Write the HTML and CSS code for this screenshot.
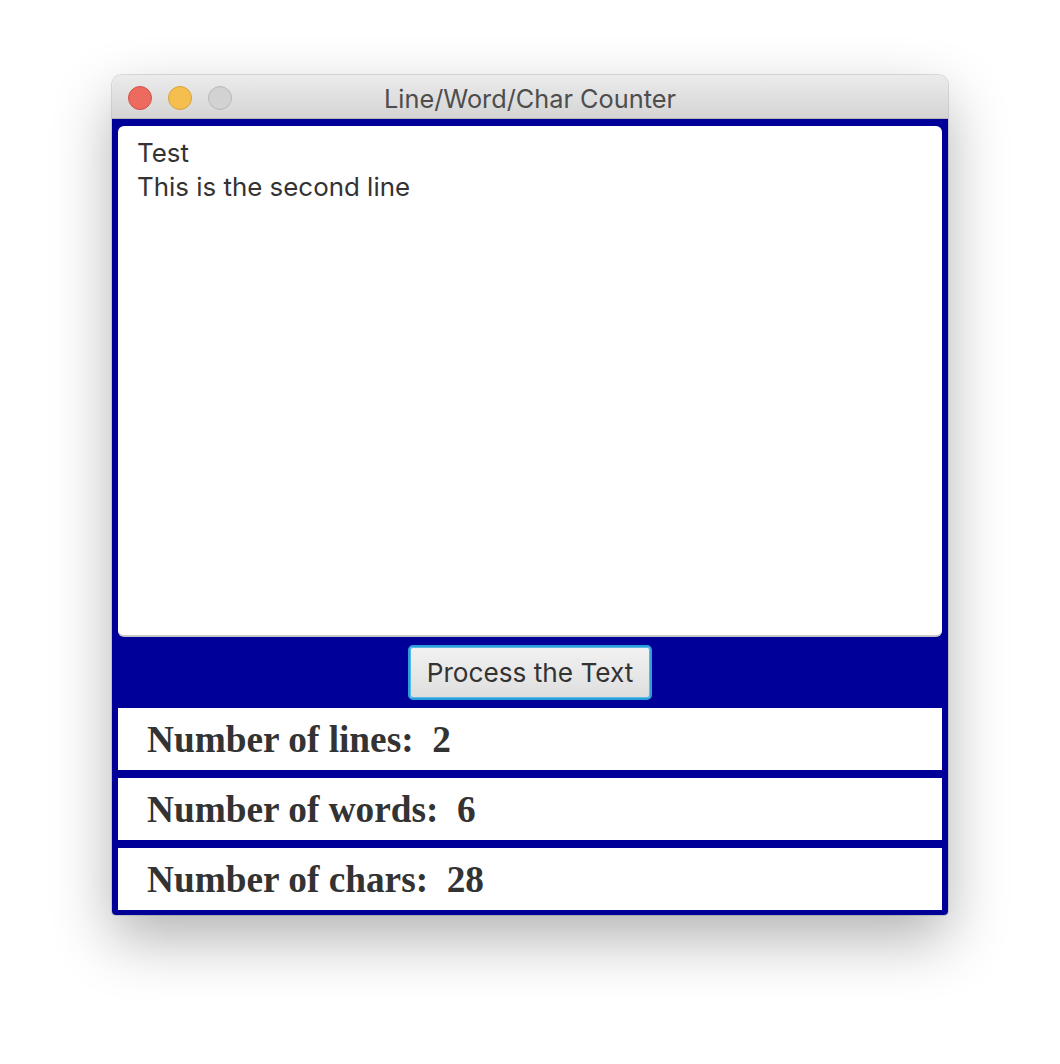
FILE: index.html
```html
<!DOCTYPE html>
<html>
<head>
<meta charset="utf-8">
<link rel="stylesheet" href="styles.css">
</head>
<body>
<div class="stage">
  <div class="window">
    <div class="titlebar">
      <div class="lights">
        <span class="light red"></span>
        <span class="light yellow"></span>
        <span class="light gray"></span>
      </div>
      <div class="title">Line/Word/Char Counter</div>
    </div>
    <div class="content">
      <div class="textarea">Test
This is the second line</div>
      <div class="button-row">
        <div class="button">Process the Text</div>
      </div>
      <div class="stat">Number of lines:  2</div>
      <div class="stat">Number of words:  6</div>
      <div class="stat">Number of chars:  28</div>
    </div>
  </div>
</div>
</body>
</html>
```
FILE: styles.css
```css
html, body {
  margin: 0;
  padding: 0;
  background: #ffffff;
}
.stage {
  display: flex;
  justify-content: flex-start;
  padding: 75px 0 0 112px;
  height: 989px;
}
.window {
  width: 836px;
  height: 840px;
  display: flex;
  flex-direction: column;
  border-radius: 10px 10px 4px 4px;
  box-shadow: 0 24px 60px rgba(0,0,0,0.30), 0 0 0 1px rgba(0,0,0,0.12);
  overflow: hidden;
}
.titlebar {
  height: 43px;
  position: relative;
  display: flex;
  align-items: center;
  justify-content: center;
  background: linear-gradient(#ebebeb, #d5d5d5);
  border-bottom: 1px solid #b4b4b4;
}
.lights {
  position: absolute;
  left: 16px;
  top: 11px;
  display: flex;
  gap: 16px;
}
.light {
  width: 22px;
  height: 22px;
  border-radius: 50%;
  border: 1px solid transparent;
}
.red { background: #ed6a5e; border-color: #d1524a; }
.yellow { background: #f5bf4f; border-color: #d9a13b; }
.gray { background: #d2d2d2; border-color: #b9b9b9; }
.title {
  font-family: Inter, "Liberation Sans", Arial, sans-serif;
  font-size: 25.3px;
  color: #4d4d4d;
  margin-top: 4px;
}
.content {
  flex: 1;
  background: #000099;
  padding: 7px 6px 5px 6px;
  display: flex;
  flex-direction: column;
}
.textarea {
  height: 499px;
  background: #ffffff;
  border-radius: 6px;
  border-bottom: 2px solid #c6c6c6;
  padding: 10px 19px 0 19px;
  white-space: pre-line;
  font-family: Inter, "Liberation Sans", Arial, sans-serif;
  font-size: 25.9px;
  line-height: 34px;
  color: #333333;
}
.button-row {
  height: 71px;
  display: flex;
  justify-content: center;
  align-items: center;
}
.button {
  width: 244px;
  height: 55px;
  box-sizing: border-box;
  border: 2px solid #2aa0d8;
  box-shadow: 0 0 0 1px #5bb8e8 inset;
  border-radius: 5px;
  background: linear-gradient(#f2f2f2, #dedede);
  display: flex;
  align-items: center;
  justify-content: center;
  font-family: Inter, "Liberation Sans", Arial, sans-serif;
  font-size: 26.2px;
  color: #333333;
}
.stat {
  height: 62px;
  background: #ffffff;
  margin-bottom: 8px;
  padding-left: 29px;
  display: flex;
  align-items: center;
  white-space: pre;
  font-family: "Liberation Serif", "Times New Roman", serif;
  font-weight: bold;
  font-size: 37.3px;
  color: #333333;
}
.stat:last-child {
  margin-bottom: 0;
}
```
